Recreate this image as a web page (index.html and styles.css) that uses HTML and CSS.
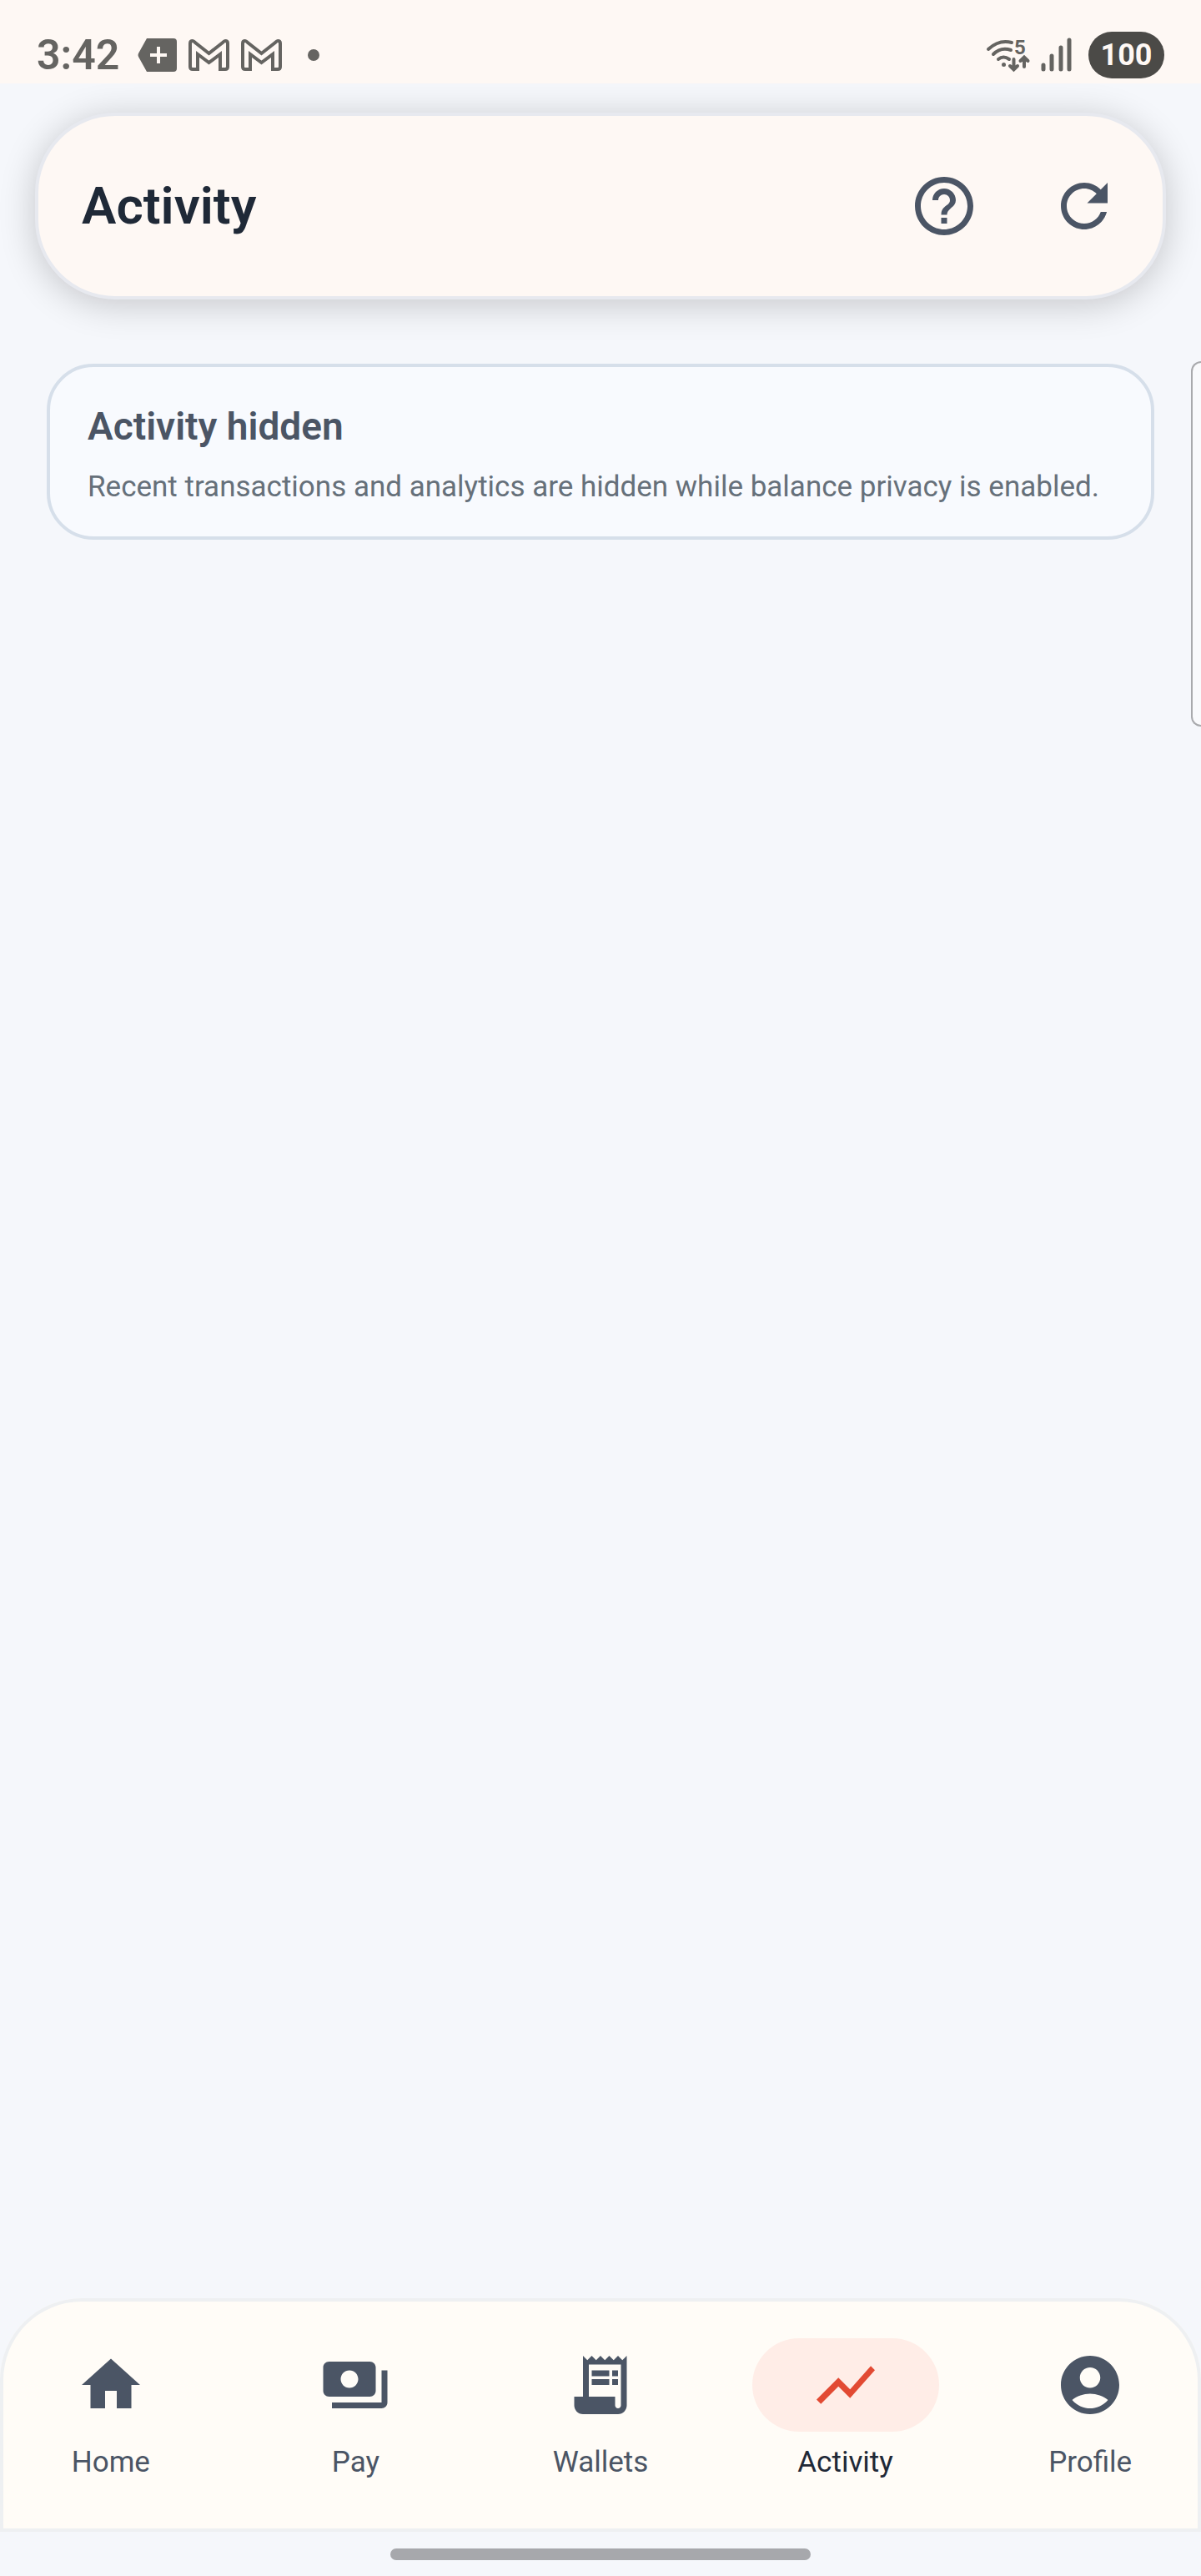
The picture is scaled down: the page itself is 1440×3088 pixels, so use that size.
FILE: index.html
```html
<!DOCTYPE html>
<html lang="en">

<head>
    <meta charset="UTF-8">
    <meta name="viewport" content="width=device-width, initial-scale=1.0">
    <title>Activity</title>
    <link rel="stylesheet" href="styles.css">
</head>

<body>
    <div class="status-bar">
        <div class="status-left">
            <span class="time">3:42</span>
            <svg class="status-tag" viewBox="0 0 47 40">
                <path fill-rule="evenodd" d="M11 0H43Q47 0 47 4V36Q47 40 43 40H11L1 22Q0 20 1 18ZM23 10V18H15V22H23V30H27V22H35V18H27V10Z" />
            </svg>
            <svg class="status-mail" viewBox="0 0 49 38">
                <path d="M2 5Q2 2 5 2Q6 2 8 4L24.5 17L41 4Q43 2 44 2Q47 2 47 5V33Q47 36 44 36H38V18L24.5 28L11 18V36H5Q2 36 2 33Z" />
            </svg>
            <svg class="status-mail" viewBox="0 0 49 38">
                <path d="M2 5Q2 2 5 2Q6 2 8 4L24.5 17L41 4Q43 2 44 2Q47 2 47 5V33Q47 36 44 36H38V18L24.5 28L11 18V36H5Q2 36 2 33Z" />
            </svg>
            <span class="status-dot"></span>
        </div>
        <div class="status-right">
            <svg class="status-wifi" viewBox="0 0 54 40">
                <path d="M3 13Q16 1 31 5M9 19Q18 10 30 14M15 25Q21 20 28 25" />
                <circle cx="21.5" cy="31.5" r="2.5" />
                <text x="34" y="19">5</text>
                <path d="M33.5 25V37M29 33L33.5 37.5L38 33M46 34V23M41.5 27L46 22.5L50.5 27" />
            </svg>
            <svg class="status-signal" viewBox="0 0 37 41">
                <path d="M3 33V38M13 22V38M24 12V38M34 3V38" />
            </svg>
            <span class="battery">100</span>
        </div>
    </div>

    <header class="app-bar">
        <h1>Activity</h1>
        <button class="icon-button" aria-label="Help">
            <svg class="icon" viewBox="0 0 24 24">
                <path d="M11 18h2v-2h-2v2zm1-16C6.48 2 2 6.48 2 12s4.48 10 10 10 10-4.48 10-10S17.52 2 12 2zm0 18c-4.41 0-8-3.59-8-8s3.59-8 8-8 8 3.59 8 8-3.59 8-8 8zm0-14c-2.21 0-4 1.79-4 4h2c0-1.1.9-2 2-2s2 .9 2 2c0 2-3 1.75-3 5h2c0-2.25 3-2.5 3-5 0-2.21-1.79-4-4-4z" />
            </svg>
        </button>
        <button class="icon-button" aria-label="Refresh">
            <svg class="icon" viewBox="0 0 24 24">
                <path d="M17.65 6.35C16.2 4.9 14.21 4 12 4c-4.42 0-7.99 3.58-7.99 8s3.57 8 7.99 8c3.73 0 6.84-2.55 7.73-6h-2.08c-.82 2.33-3.04 4-5.65 4-3.31 0-6-2.69-6-6s2.69-6 6-6c1.66 0 3.14.69 4.22 1.78L13 11h7V4l-2.35 2.35z" />
            </svg>
        </button>
    </header>

    <main class="content">
        <section class="card">
            <h2>Activity hidden</h2>
            <p>Recent transactions and analytics are hidden while balance privacy is enabled.</p>
        </section>
    </main>

    <div class="edge-handle"></div>

    <nav class="bottom-nav">
        <a class="nav-item" href="#home">
            <span class="nav-icon">
                <svg class="icon" viewBox="0 0 24 24">
                    <path d="M10 20v-6h4v6h5v-8h3L12 3 2 12h3v8z" />
                </svg>
            </span>
            <span>Home</span>
        </a>
        <a class="nav-item" href="#pay">
            <span class="nav-icon">
                <svg class="icon" viewBox="0 0 24 24">
                    <path d="M19 14V6c0-1.1-.9-2-2-2H3c-1.1 0-2 .9-2 2v8c0 1.1.9 2 2 2h14c1.1 0 2-.9 2-2zm-9-1c-1.66 0-3-1.34-3-3s1.34-3 3-3 3 1.34 3 3-1.34 3-3 3zm13-6v11c0 1.1-.9 2-2 2H4v-2h17V7h2z" />
                </svg>
            </span>
            <span>Pay</span>
        </a>
        <a class="nav-item" href="#wallets">
            <span class="nav-icon">
                <svg class="icon" viewBox="0 0 24 24">
                    <path d="M19.5 3.5L18 2l-1.5 1.5L15 2l-1.5 1.5L12 2l-1.5 1.5L9 2 7.5 3.5 6 2v14H3v3c0 1.66 1.34 3 3 3h12c1.66 0 3-1.34 3-3V2l-1.5 1.5zM19 19c0 .55-.45 1-1 1s-1-.45-1-1v-3H8V5h11v14z" />
                    <path d="M9 7h6v2H9zM16 7h2v2h-2zM9 10h6v2H9zM16 10h2v2h-2z" />
                </svg>
            </span>
            <span>Wallets</span>
        </a>
        <a class="nav-item active" href="#activity" aria-current="page">
            <span class="nav-icon">
                <svg class="icon" viewBox="0 0 24 24">
                    <path d="M3.5 18.49l6-6.01 4 4L22 6.92l-1.41-1.41-7.09 7.97-4-4L2 16.99z" />
                </svg>
            </span>
            <span>Activity</span>
        </a>
        <a class="nav-item" href="#profile">
            <span class="nav-icon">
                <svg class="icon" viewBox="0 0 24 24">
                    <path d="M12 2C6.48 2 2 6.48 2 12s4.48 10 10 10 10-4.48 10-10S17.52 2 12 2zm0 4c1.93 0 3.5 1.57 3.5 3.5S13.93 13 12 13s-3.5-1.57-3.5-3.5S10.07 6 12 6zm0 14c-2.03 0-4.43-.82-6.14-2.88C7.55 15.8 9.68 15 12 15s4.45.8 6.14 2.12C16.43 19.18 14.03 20 12 20z" />
                </svg>
            </span>
            <span>Profile</span>
        </a>
    </nav>

    <div class="gesture-area">
        <div class="gesture-bar"></div>
    </div>
</body>

</html>
```
FILE: styles.css
```css
* {
    box-sizing: border-box;
}

body {
    font-family: Roboto, "Noto Sans", sans-serif;
    background-color: #f5f7fb;
    color: #4b5565;
    display: flex;
    flex-direction: column;
    min-height: 100vh;
    margin: 0;
    overflow-x: hidden;
}

h1,
h2,
p {
    margin: 0;
}

.status-bar {
    display: flex;
    justify-content: space-between;
    align-items: center;
    height: 100px;
    padding: 31px 44px 0;
    background-color: #fef8f4;
    color: #656461;
}

.status-left,
.status-right {
    display: flex;
    align-items: center;
}

.status-left {
    gap: 14px;
}

.time {
    font-size: 50px;
    line-height: 60px;
    font-weight: 600;
    margin-right: 8px;
}

.status-tag {
    width: 47px;
    height: 40px;
    fill: #656461;
}

.status-mail {
    width: 49px;
    height: 38px;
    fill: none;
    stroke: #656461;
    stroke-width: 4;
}

.status-dot {
    width: 14px;
    height: 14px;
    margin-left: 17px;
    border-radius: 50%;
    background-color: #656461;
}

.status-right {
    gap: 12px;
}

.status-wifi,
.status-signal {
    fill: none;
    stroke: #656461;
    stroke-linecap: round;
    overflow: visible;
}

.status-wifi {
    width: 54px;
    height: 40px;
    stroke-width: 4;
}

.status-wifi circle {
    fill: #656461;
    stroke: none;
}

.status-wifi text {
    fill: #656461;
    stroke: none;
    font-size: 24px;
    font-weight: 700;
}

.status-signal {
    width: 37px;
    height: 41px;
    stroke-width: 5;
}

.battery {
    margin-left: 8px;
    width: 91px;
    border-radius: 28px;
    background-color: #4b4a47;
    color: #fef8f4;
    font-size: 36px;
    line-height: 56px;
    font-weight: 700;
    text-align: center;
}

.app-bar {
    display: flex;
    align-items: center;
    height: 224px;
    margin: 35px 42px 0;
    padding: 0 10px 0 52px;
    border: 4px solid #e7e9ef;
    border-radius: 96px;
    background-color: #fef8f4;
    box-shadow: 0 6px 44px rgba(0, 0, 0, 0.2);
}

.app-bar h1 {
    flex: 1;
    font-size: 62px;
    line-height: 72px;
    font-weight: 600;
    color: #1f2937;
}

.icon-button {
    display: flex;
    align-items: center;
    justify-content: center;
    width: 168px;
    height: 168px;
    padding: 0;
    border: none;
    background: none;
    color: inherit;
    cursor: pointer;
}

.icon {
    width: 84px;
    height: 84px;
    fill: currentColor;
}

.content {
    flex: 1;
    padding: 77px 56px;
}

.card {
    padding: 38px 45px 31px;
    border: 4px solid #d6dfea;
    border-radius: 56px;
    background-color: #f8fafe;
}

.card h2 {
    font-size: 46px;
    line-height: 66px;
    font-weight: 600;
}

.card p {
    margin-top: 12px;
    font-size: 35px;
    line-height: 56px;
    color: #66707a;
}

/* system side panel handle, runs off the right edge */
.edge-handle {
    position: absolute;
    top: 433px;
    right: 0;
    width: 12px;
    height: 438px;
    border: 2px solid #a9aaad;
    border-right: none;
    border-radius: 14px 0 0 14px;
    background-color: #f9fafc;
}

.bottom-nav {
    display: flex;
    gap: 28px;
    height: 280px;
    padding-top: 48px;
    border-radius: 98px 98px 0 0;
    background-color: #fffcf7;
    box-shadow: inset 0 0 0 4px #eef0f2;
}

.nav-item {
    flex: 1;
    display: flex;
    flex-direction: column;
    align-items: center;
    gap: 16px;
    font-size: 35px;
    line-height: 42px;
    color: #4b5565;
    text-decoration: none;
}

.nav-icon {
    display: flex;
    align-items: center;
    justify-content: center;
    width: 224px;
    height: 112px;
    border-radius: 56px;
}

.nav-item.active {
    color: #1f2937;
}

.nav-item.active .nav-icon {
    background-color: #ffede7;
    color: #e24a33;
}

.gesture-area {
    display: flex;
    justify-content: center;
    padding: 20px 0 19px;
}

.gesture-bar {
    width: 35%;
    height: 14px;
    border-radius: 7px;
    background-color: #a7a8ac;
}
```
